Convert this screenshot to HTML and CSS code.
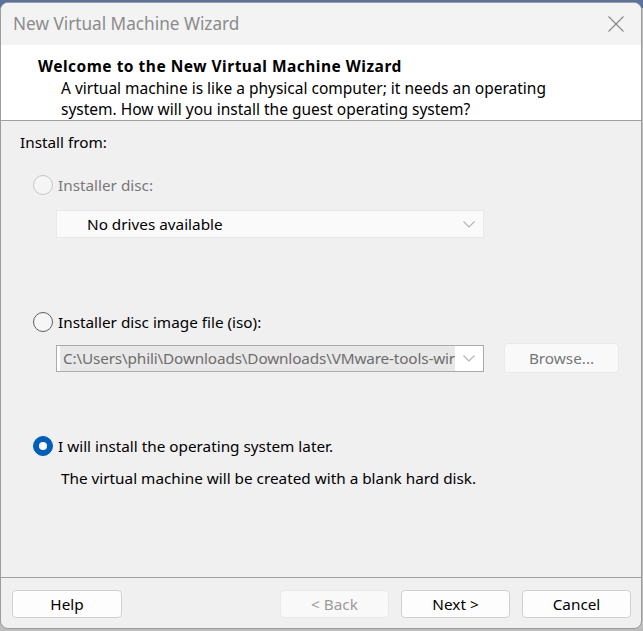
FILE: index.html
```html
<!DOCTYPE html>
<html>
<head>
<meta charset="utf-8">
<title>New Virtual Machine Wizard</title>
<link rel="stylesheet" href="styles.css">
</head>
<body>
<div class="dialog">
  <div class="titlebar">
    <span class="title">New Virtual Machine Wizard</span>
    <svg class="close" width="16" height="16" viewBox="0 0 16 16"><path d="M0.5 0.5 L15.5 15.5 M15.5 0.5 L0.5 15.5" stroke="#8a8a8a" stroke-width="1.2" fill="none"/></svg>
  </div>
  <div class="header">
    <div class="heading">Welcome to the New Virtual Machine Wizard</div>
    <div class="subtitle">A virtual machine is like a physical computer; it needs an operating<br>system. How will you install the guest operating system?</div>
  </div>
  <div class="content">
    <div class="group-label">Install from:</div>
    <div class="radio-row row1 disabled">
      <span class="radio"></span><span class="label">Installer disc:</span>
    </div>
    <div class="combo combo-disabled">
      <span class="combo-text">No drives available</span>
      <svg class="chev" width="12" height="7" viewBox="0 0 12 7"><path d="M0.5 0.5 L6 6 L11.5 0.5" stroke="#b4b4b4" stroke-width="1.1" fill="none"/></svg>
    </div>
    <div class="radio-row row2">
      <span class="radio"></span><span class="label">Installer disc image file (iso):</span>
    </div>
    <div class="iso-row">
      <div class="combo combo-iso">
        <span class="iso-text"><span class="sel">C:\Users\phili\Downloads\Downloads\VMware-tools-wir</span></span>
        <svg class="chev" width="12" height="7" viewBox="0 0 12 7"><path d="M0.5 0.5 L6 6 L11.5 0.5" stroke="#b4b4b4" stroke-width="1.1" fill="none"/></svg>
      </div>
      <div class="btn btn-disabled browse">Browse...</div>
    </div>
    <div class="radio-row row3">
      <span class="radio checked"></span><span class="label">I will install the operating system later.</span>
    </div>
    <div class="desc">The virtual machine will be created with a blank hard disk.</div>
  </div>
  <div class="footer">
    <div class="btn help">Help</div>
    <div class="spacer"></div>
    <div class="btn btn-disabled">&lt; Back</div>
    <div class="btn">Next &gt;</div>
    <div class="btn">Cancel</div>
  </div>
</div>
</body>
</html>
```

FILE: styles.css
```css
* { box-sizing: border-box; }
html, body {
  margin: 0;
  padding: 0;
  width: 643px;
  height: 631px;
  overflow: hidden;
}
body {
  background: linear-gradient(to bottom, #5b739c 0px, #5b739c 8px, #bdbdbd 8px);
  font-family: "Noto Sans", "Open Sans", sans-serif;
  font-size: 15.3px;
  color: #000;
}
.dialog {
  margin-top: 2px;
  width: 642px;
  height: 627px;
  border: 1px solid #9c9c9c;
  border-radius: 8px;
  background: #f0f0f0;
  overflow: hidden;
  display: flex;
  flex-direction: column;
}
.titlebar {
  height: 42px;
  flex: none;
  background: #f3f3f3;
  display: flex;
  align-items: center;
  padding-left: 12px;
  padding-right: 17px;
}
.title {
  font-size: 17.2px;
  color: #8b8b8b;
  flex: 1;
  padding-bottom: 2px;
}
.close { flex: none; margin-top: -1px; }
.header {
  height: 76px;
  flex: none;
  background: #fff;
  border-bottom: 1px solid #a0a0a0;
  padding: 11px 0 0 37px;
}
.heading {
  font-weight: bold;
  font-size: 15.5px;
  letter-spacing: 0.5px;
  line-height: 20px;
}
.subtitle {
  margin-left: 23px;
  font-size: 15.5px;
  line-height: 21px;
  margin-top: 2px;
}
.content {
  height: 456px;
  flex: none;
  padding-top: 11px;
  display: flex;
  flex-direction: column;
  align-items: flex-start;
}
.group-label {
  margin-left: 19px;
  line-height: 20px;
}
.radio-row {
  display: flex;
  align-items: center;
  height: 20px;
  margin-left: 32px;
  gap: 5px;
}
.row1 { margin-top: 23px; }
.row2 { margin-top: 74px; }
.row3 { margin-top: 63px; }
.radio {
  width: 20px;
  height: 20px;
  border-radius: 50%;
  border: 1px solid #5d5d5d;
  background: #f6f6f6;
  flex: none;
  position: relative;
}
.disabled .radio { border-color: #c6c6c6; background: #f5f5f5; }
.disabled .label { color: #787878; }
.radio.checked {
  background: #005fb8;
  border-color: #005fb8;
}
.radio.checked::after {
  content: "";
  position: absolute;
  left: 5px;
  top: 5px;
  width: 8px;
  height: 8px;
  border-radius: 50%;
  background: #fff;
}
.combo {
  display: flex;
  align-items: center;
  width: 428px;
  margin-left: 55px;
  position: relative;
}
.combo-disabled {
  margin-top: 15px;
  height: 28px;
  background: #fafafa;
  border: 1px solid #e9e9e9;
  padding-left: 30px;
}
.chev { position: absolute; right: 8px; top: 50%; margin-top: -3px; }
.iso-row {
  display: flex;
  align-items: center;
  margin-top: 11px;
}
.combo-iso {
  height: 27px;
  background: #fff;
  border: 1px solid #ababab;
  padding-left: 3px;
}
.iso-text {
  white-space: nowrap;
  display: block;
  letter-spacing: -0.15px;
}
.sel {
  background: #e8e8e8;
  color: #6d6d6d;
  padding: 2px 0 3px 3px;
}
.btn {
  width: 109px;
  height: 28px;
  border: 1px solid #d0d0d0;
  border-radius: 4px;
  background: #fdfdfd;
  display: flex;
  align-items: center;
  justify-content: center;
  flex: none;
}
.btn-disabled {
  background: #f9f9f9;
  border-color: #e9e9e9;
  color: #9b9b9b;
}
.browse {
  width: 115px;
  height: 30px;
  margin-left: 20px;
  color: #777;
}
.desc {
  margin-left: 60px;
  margin-top: 12px;
  line-height: 20px;
}
.footer {
  flex: 1;
  border-top: 1px solid #a0a0a0;
  display: flex;
  align-items: flex-start;
  padding: 12px 10px 0 11px;
  gap: 12px;
}
.help { width: 110px; }
.spacer { flex: 1; }
```
